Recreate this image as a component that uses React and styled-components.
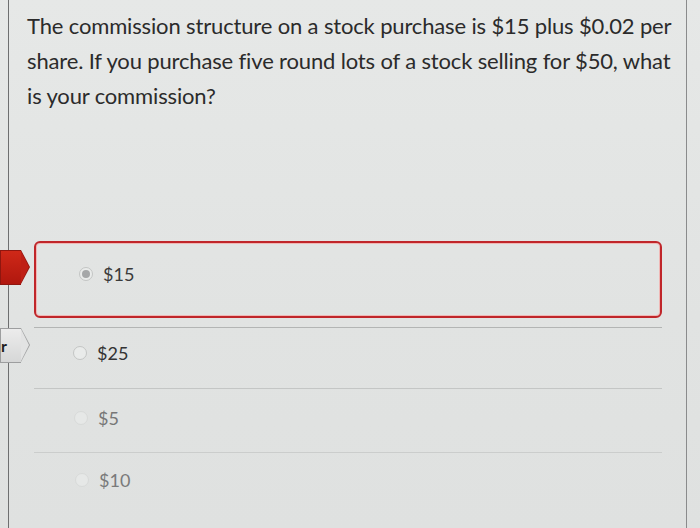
import React from 'react'
import styled, { createGlobalStyle } from 'styled-components'

const GlobalStyle = createGlobalStyle`
  html, body {
    margin: 0;
    padding: 0;
    background: #e2e4e3;
  }
  body {
    font-family: Lato, "Open Sans", sans-serif;
    color: #2e2e2e;
  }
`

const Page = styled.div`
  position: relative;
  display: flex;
  width: 700px;
  height: 528px;
  overflow: hidden;
  background: linear-gradient(180deg, #e6e8e7 0%, #e1e3e2 60%, #dfe1e0 100%);
`

const Rail = styled.div`
  width: 8px;
  flex-shrink: 0;
  border-right: 1.5px solid #6e6f70;
`

const Main = styled.div`
  width: 678px;
  border-right: 1.5px solid #8a8b8c;
  padding: 8px 0 0 18px;
  box-sizing: border-box;
`

const Question = styled.p`
  margin: 0;
  width: 655px;
  font-size: 22px;
  line-height: 35px;
  color: #2b2b2b;
  letter-spacing: -0.15px;
`

const Options = styled.div`
  margin: 128px 0 0 7px;
  width: 628px;
`

const Row = styled.div`
  display: flex;
  align-items: center;
  height: ${p => p.h}px;
  border-bottom: 1px solid ${p => p.line};
  box-sizing: border-box;
  padding-left: ${p => p.pad}px;
  padding-bottom: ${p => p.lift}px;
`

const SelectedRow = styled.div`
  padding-bottom: 9px;
  border-bottom: 1px solid #b3b5b4;
`

const SelectedBox = styled.div`
  display: flex;
  align-items: center;
  height: 77px;
  box-sizing: border-box;
  border: 2px solid #c0262a;
  border-radius: 6px;
  box-shadow: inset 0 0 0 1px #f0b7b5;
  padding: 0 0 12px 43px;
`

const Radio = styled.span`
  width: 14px;
  height: 14px;
  border-radius: 50%;
  box-sizing: border-box;
  border: 1px solid ${p => (p.faint ? '#d8dad9' : '#c3c5c4')};
  background: ${p => (p.faint ? '#e6e8e7' : '#e9ebea')};
  display: flex;
  align-items: center;
  justify-content: center;
  margin-right: 10px;
  &::after {
    content: '';
    width: 8px;
    height: 8px;
    border-radius: 50%;
    background: ${p => (p.checked ? '#a5a7a8' : 'transparent')};
  }
`

const Label = styled.span`
  font-size: 18px;
  color: ${p => p.color};
`

const Tab = styled.div`
  position: absolute;
  left: 0;
  top: ${p => p.top}px;
  width: 21px;
  height: 35px;
  background: ${p => p.bg};
  border: 1px solid ${p => p.edge};
  border-right: none;
  box-sizing: border-box;
  display: flex;
  align-items: center;
  font-size: 16px;
  font-weight: 700;
  color: #1e1e1e;
  &::after {
    content: '';
    position: absolute;
    right: -9px;
    top: -1px;
    width: 0;
    height: 0;
    border-top: 17.5px solid transparent;
    border-bottom: 17.5px solid transparent;
    border-left: 9px solid ${p => p.edge};
  }
  &::before {
    content: '';
    position: absolute;
    right: -8px;
    top: 0px;
    width: 0;
    height: 0;
    border-top: 16.5px solid transparent;
    border-bottom: 16.5px solid transparent;
    border-left: 8px solid ${p => p.tip};
    z-index: 1;
  }
`

const TabText = styled.span`
  margin-left: 0;
`

const options = [
  { label: '$25', h: 61, pad: 39, color: '#333', faint: false, line: '#c4c6c5', lift: 10 },
  { label: '$5', h: 64, pad: 40, color: '#777', faint: true, line: '#cbcdcc', lift: 6 },
  { label: '$10', h: 64, pad: 41, color: '#7a7a7a', faint: true, line: 'transparent', lift: 10 },
]

export default function App() {
  return (
    <>
      <GlobalStyle />
      <Page>
        <Rail />
        <Main>
          <Question>
            The commission structure on a stock purchase is $15 plus $0.02 per
            share. If you purchase five round lots of a stock selling for $50, what
            is your commission?
          </Question>
          <Options>
            <SelectedRow>
              <SelectedBox>
                <Radio checked />
                <Label color="#3a3a3a">$15</Label>
              </SelectedBox>
            </SelectedRow>
            {options.map(o => (
              <Row key={o.label} h={o.h} pad={o.pad} line={o.line} lift={o.lift}>
                <Radio faint={o.faint} />
                <Label color={o.color}>{o.label}</Label>
              </Row>
            ))}
          </Options>
        </Main>
        <Tab top={250} bg="linear-gradient(180deg, #cf2818 0%, #b0170e 100%)" edge="#8f160f" tip="#bf1f16" />
        <Tab top={328} bg="linear-gradient(180deg, #ececec 0%, #d6d7d7 100%)" edge="#9d9e9f" tip="#e2e3e3">
          <TabText>r</TabText>
        </Tab>
      </Page>
    </>
  )
}
